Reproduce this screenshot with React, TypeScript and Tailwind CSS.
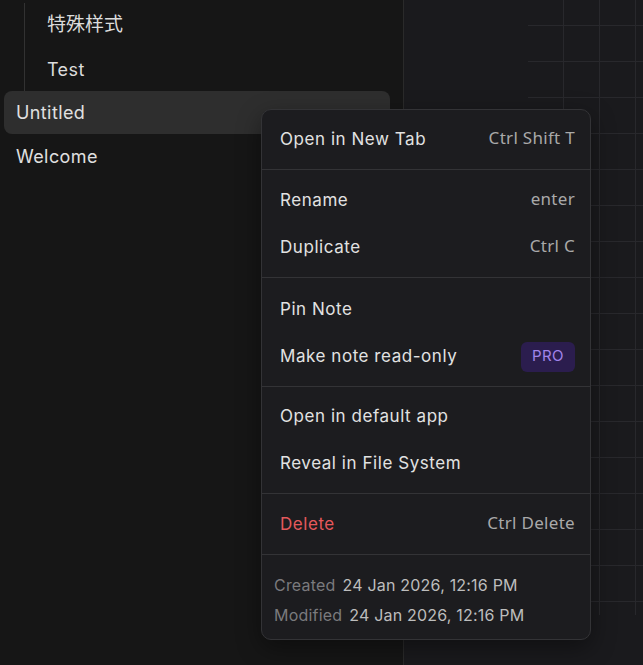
import React from "react";

const font = { fontFamily: "Inter, 'Noto Sans CJK SC', sans-serif" };

function Item({ label, right, danger }: { label: string; right?: React.ReactNode; danger?: boolean }) {
  return (
    <div className="flex h-[47px] items-center justify-between rounded-md pl-3 pr-[9px]">
      <span className={"tracking-[0.55px] " + (danger ? "text-[#e5595c]" : "text-[#e2e2e2]")}>{label}</span>
      {right}
    </div>
  );
}

function Shortcut({ children }: { children: React.ReactNode }) {
  return (
    <span
      className="mb-[3px] text-[17px] tracking-[0.3px] text-[#a9a9a9]"
      style={{ fontFamily: "'Noto Sans', sans-serif" }}
    >
      {children}
    </span>
  );
}

export default function App() {
  return (
    <div className="relative flex h-[665px] w-[643px] overflow-hidden text-[17px]" style={font}>
      <aside className="w-[404px] shrink-0 border-r border-[#2a2a2a] bg-[#161616] pt-[3px] text-[18px] tracking-[0.4px]">
        <div className="ml-[24px] border-l border-[#323232] pl-[22px]">
          <div className="flex h-[44px] items-center text-[19px] tracking-normal text-[#dcdcdc]">特殊样式</div>
          <div className="flex h-[44px] items-center text-[#dcdcdc]">Test</div>
        </div>
        <div className="ml-1 flex h-[43px] w-[386px] items-center rounded-lg bg-[#2e2e2e] pl-3 text-[#e0e0e0]">
          Untitled
        </div>
        <div className="ml-1 flex h-[44px] items-center pl-3 text-[#e0e0e0]">Welcome</div>
      </aside>
      <main className="flex-1 bg-[#1a1a1d]">
        <div className="ml-[124px] mt-[-10px] h-[625px] bg-[linear-gradient(to_right,transparent_35px,#28282c_35px),linear-gradient(to_bottom,transparent_35px,#28282c_35px)] bg-[size:36px_36px]" />
      </main>

      <div className="absolute left-[261px] top-[109px] w-[330px] rounded-[10px] border border-[#333336] bg-[#1c1c1f] shadow-[0_8px_24px_rgba(0,0,0,0.4)]">
        <div className="px-1.5 pb-1.5 pt-[6px]">
          <Item label="Open in New Tab" right={<Shortcut>Ctrl Shift T</Shortcut>} />
        </div>
        <div className="border-t border-[#333336] px-1.5 pb-1.5 pt-[7px]">
          <Item label="Rename" right={<Shortcut>enter</Shortcut>} />
          <Item label="Duplicate" right={<Shortcut>Ctrl C</Shortcut>} />
        </div>
        <div className="border-t border-[#333336] px-1.5 pb-1.5 pt-[8px]">
          <Item label="Pin Note" />
          <Item
            label="Make note read-only"
            right={
              <span className="flex h-[30px] w-[54px] items-center justify-center rounded-md bg-[#2b1d4e] text-[15px] tracking-[0.4px] text-[#a184ea]">
                PRO
              </span>
            }
          />
        </div>
        <div className="border-t border-[#333336] px-1.5 pb-1.5 pt-[6px]">
          <Item label="Open in default app" />
          <Item label="Reveal in File System" />
        </div>
        <div className="border-t border-[#333336] px-1.5 pb-1.5 pt-[7px]">
          <Item label="Delete" danger right={<Shortcut>Ctrl Delete</Shortcut>} />
        </div>
        <div className="flex flex-col gap-[6px] border-t border-[#333336] px-3 pb-[12px] pt-[18px] text-[16px] tracking-[0.2px]">
          <div className="flex gap-[7px]">
            <span className="text-[#7a7a7d]">Created</span>
            <span className="text-[#bdbdbd]">24 Jan 2026, 12:16 PM</span>
          </div>
          <div className="flex gap-[7px]">
            <span className="text-[#7a7a7d]">Modified</span>
            <span className="text-[#bdbdbd]">24 Jan 2026, 12:16 PM</span>
          </div>
        </div>
      </div>
    </div>
  );
}
